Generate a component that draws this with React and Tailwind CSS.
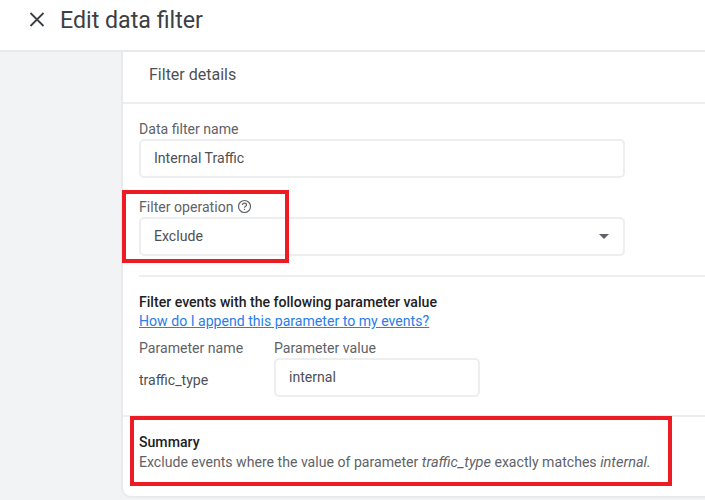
import React from "react";

function Field({ value, className = "", children }) {
  return (
    <div className={`h-[39px] border-2 border-[#eceef0] rounded-[5px] flex items-center pl-[13px] pr-[14px] text-[14.1px] text-[#4d5156] bg-white ${className}`}>
      <span className="flex-1">{value}</span>
      {children}
    </div>
  );
}

export default function App() {
  return (
    <div className="relative w-[705px] h-[500px] overflow-hidden bg-white font-['Roboto',sans-serif] text-[14.1px] text-[#5f6368]">
      <header className="h-[52px] bg-white border-b-2 border-[#e8e9eb] flex items-start pl-[29px] pt-[3px]">
        <svg width="16" height="16" viewBox="0 0 16 16" className="mt-[9px]" fill="none" stroke="#3c4043" strokeWidth="1.8">
          <path d="M1.5 1 14.5 14M14.5 1 1.5 14" />
        </svg>
        <h1 className="ml-[15px] text-[23.2px] leading-[34px] text-[#3c4043] font-normal">Edit data filter</h1>
      </header>
      <div className="flex h-[448px] bg-[#f1f3f4]">
        <div className="w-[121px] shrink-0" />
        <main className="flex-1 h-[446px] bg-white border-l-2 border-b-2 border-[#e8eaed] rounded-bl-[10px]">
          <div className="h-[52px] border-b-2 border-[#eceef0] pl-[26px] pb-[4px] flex items-center text-[16px] text-[#4d5156]">
            <span>Filter details</span>
          </div>
          <div className="pl-[16px]">
            <div className="pr-[80px]">
              <label className="block mt-[16px] leading-[19px] text-[#5f6368]">Data filter name</label>
              <Field value="Internal Traffic" />
              <label className="mt-[19px] leading-[20px] text-[#5f6368] flex items-center">
                Filter operation
                <svg width="15" height="15" viewBox="0 0 15 15" className="ml-[4px] mb-[1px]" fill="none" stroke="#5f6368">
                  <circle cx="7.5" cy="7.5" r="6" strokeWidth="1.2" />
                  <path d="M5.5 6c0-1.1.9-1.9 2-1.9s2 .8 2 1.8c0 1.3-2 1.4-2 2.9" strokeWidth="1.2" />
                  <path d="M7.5 9.8v1.2" strokeWidth="1.2" />
                </svg>
              </label>
              <Field value="Exclude">
                <svg width="10" height="5" viewBox="0 0 10 5" fill="#5f6368"><path d="M0 0h10L5 5z" /></svg>
              </Field>
            </div>
            <div className="mt-[19px] border-t-2 border-[#eceef0] pt-[16px]">
              <p className="font-medium text-[#202124] leading-[19px]">Filter events with the following parameter value</p>
              <a className="block text-[#2b7de9] underline leading-[19px]">How do I append this parameter to my events?</a>
              <div className="flex mt-[8px]">
                <div className="w-[135px]">
                  <div className="leading-[19px] text-[#5f6368]">Parameter name</div>
                  <div className="mt-[13px] leading-[19px] text-[#4d5156]">traffic_type</div>
                </div>
                <div>
                  <div className="leading-[19px] text-[#5f6368]">Parameter value</div>
                  <Field value="internal" className="w-[206px]" />
                </div>
              </div>
            </div>
          </div>
          <div className="mt-[18px] border-t-2 border-[#eceef0] pl-[16px] pt-[16px]">
            <div className="font-medium text-[#202124] leading-[19px]">Summary</div>
            <p className="leading-[21px] text-[#5f6368]">
              Exclude events where the value of parameter <em className="text-[14.5px]">traffic_type</em> exactly matches <em className="text-[14.5px]">internal.</em>
            </p>
          </div>
        </main>
      </div>
      <div className="absolute left-[122px] top-[190px] w-[167px] h-[73px] border-4 border-[#ed1c24]" />
      <div className="absolute left-[130px] top-[416px] w-[542px] h-[70px] border-4 border-[#ed1c24]" />
    </div>
  );
}
